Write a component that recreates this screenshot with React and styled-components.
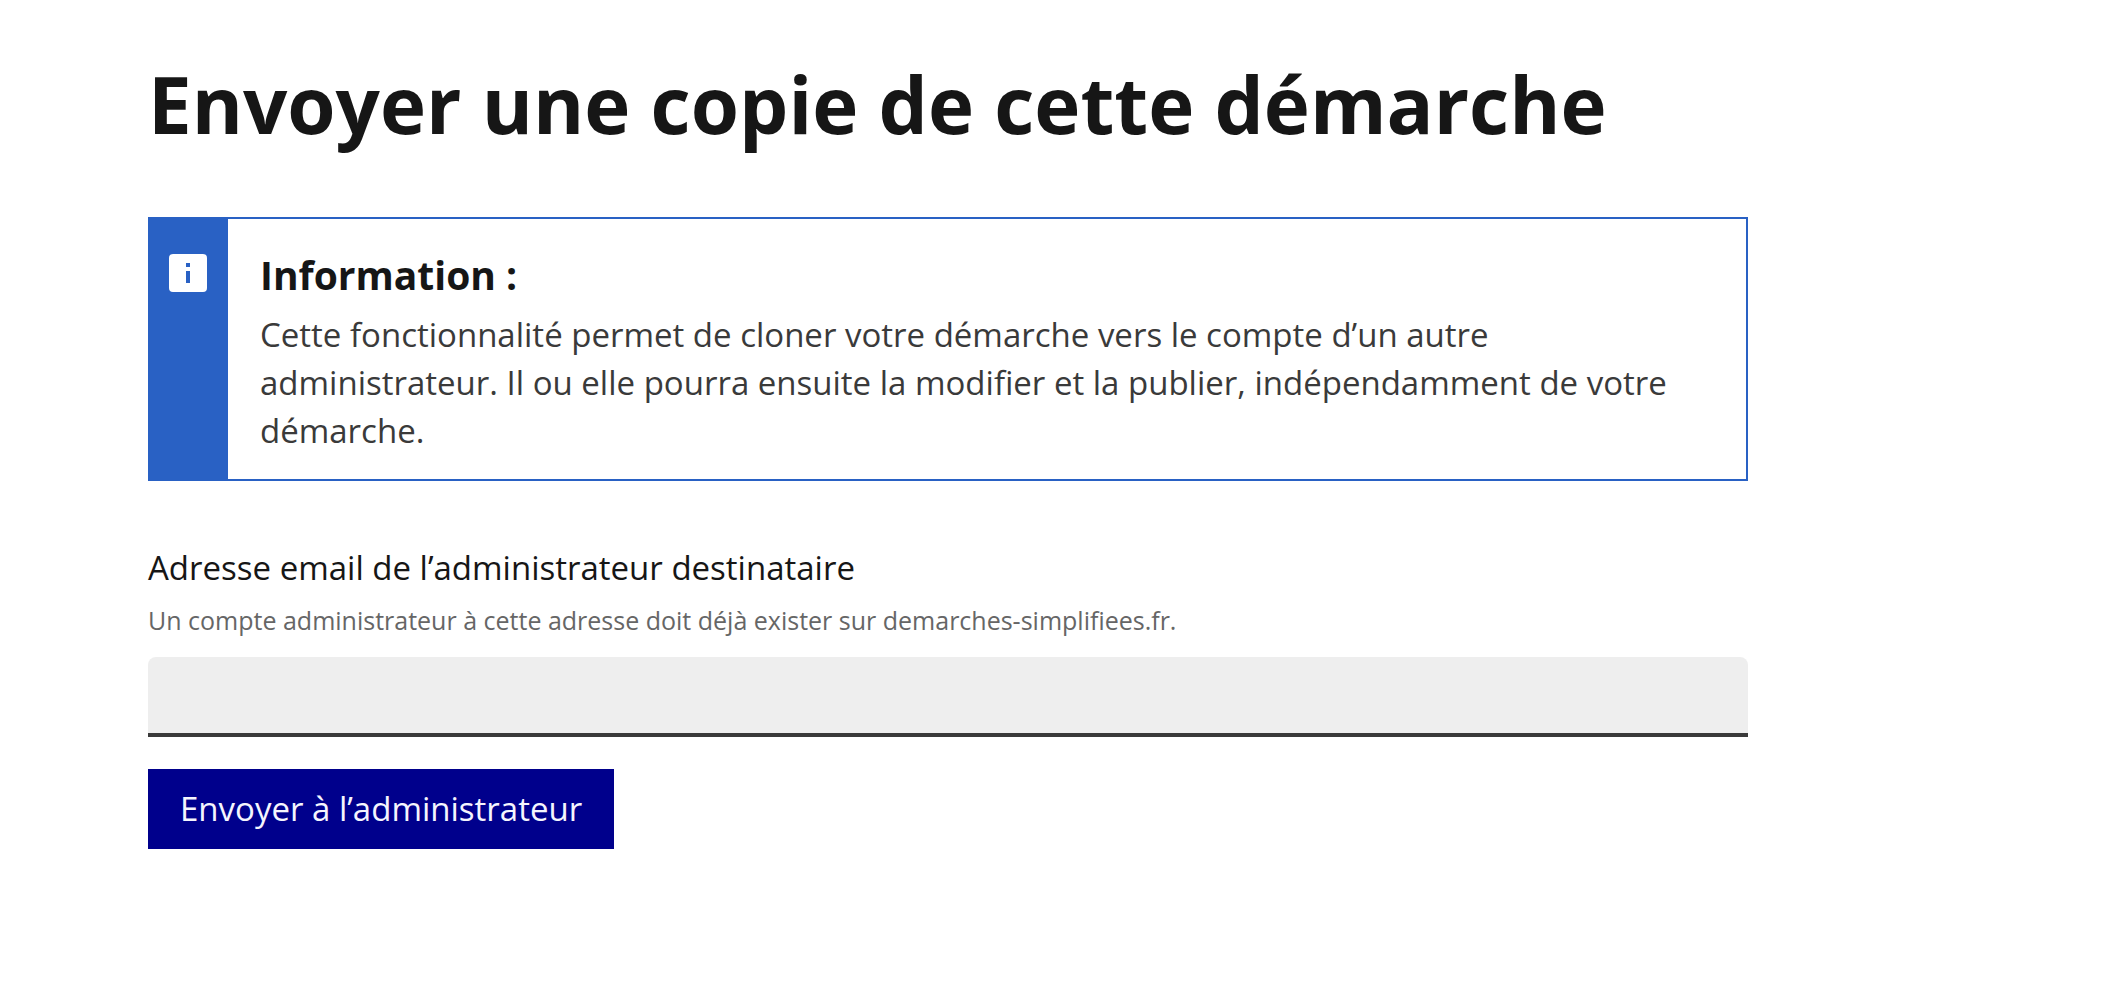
import React from "react";
import styled, { createGlobalStyle } from "styled-components";

const GlobalStyle = createGlobalStyle`
  *, *::before, *::after {
    box-sizing: border-box;
  }
  body {
    margin: 0;
    background: #ffffff;
    color: #161616;
    font-family: "Open Sans", "Noto Sans", sans-serif;
    font-size: 33px;
    line-height: 48px;
  }
`;

const Page = styled.main`
  padding: 56px 148px;
`;

const Content = styled.div`
  max-width: 1600px;
`;

const Title = styled.h1`
  margin: 0 0 65px;
  font-size: 78px;
  font-weight: 700;
  line-height: 96px;
`;

const Alert = styled.section`
  display: flex;
  margin-bottom: 63px;
  border: 2px solid #2961c4;
`;

const AlertStripe = styled.div`
  display: flex;
  flex: none;
  justify-content: center;
  align-items: flex-start;
  width: 78px;
  padding: 35px 2px 0 0;
  background: #2961c4;
`;

const AlertBody = styled.div`
  flex: 1;
  padding: 30px 64px 24px 32px;
`;

const AlertTitle = styled.h2`
  margin: 0 0 10px;
  font-size: 39px;
  font-weight: 700;
  line-height: 52px;
`;

const AlertText = styled.p`
  margin: 0;
  color: #3a3a3a;
`;

const Form = styled.form`
  display: flex;
  flex-direction: column;
  align-items: flex-start;
`;

const Label = styled.label`
  margin-bottom: 8px;
`;

const Hint = styled.p`
  margin: 0 0 17px;
  color: #666666;
  font-size: 25px;
  line-height: 40px;
`;

const Input = styled.input`
  width: 100%;
  height: 80px;
  margin-bottom: 32px;
  padding: 0 32px;
  border: 0;
  border-radius: 8px 8px 0 0;
  background: #eeeeee;
  box-shadow: inset 0 -4px 0 #3a3a3a;
  color: #3a3a3a;
  font: inherit;
`;

const Button = styled.button`
  min-height: 80px;
  padding: 16px 32px;
  border: 0;
  background: #00008c;
  color: #f5f5fe;
  font: inherit;
  font-weight: 500;
  cursor: pointer;
`;

function InfoIcon() {
  return (
    <svg width="38" height="38" viewBox="0 0 38 38" aria-hidden="true">
      <path
        fill="#ffffff"
        fillRule="evenodd"
        d="M4 0H34A4 4 0 0 1 38 4V34A4 4 0 0 1 34 38H4A4 4 0 0 1 0 34V4A4 4 0 0 1 4 0ZM17 9V13H21V9ZM17 17V29H21V17Z"
      />
    </svg>
  );
}

export default function App() {
  return (
    <>
      <GlobalStyle />
      <Page lang="fr">
        <Content>
          <Title>Envoyer une copie de cette démarche</Title>
          <Alert>
            <AlertStripe>
              <InfoIcon />
            </AlertStripe>
            <AlertBody>
              <AlertTitle>Information :</AlertTitle>
              <AlertText>
                Cette fonctionnalité permet de cloner votre démarche vers le
                compte d’un autre administrateur. Il ou elle pourra ensuite la
                modifier et la publier, indépendamment de votre démarche.
              </AlertText>
            </AlertBody>
          </Alert>
          <Form onSubmit={(event) => event.preventDefault()}>
            <Label htmlFor="email">
              Adresse email de l’administrateur destinataire
            </Label>
            <Hint id="email-hint">
              Un compte administrateur à cette adresse doit déjà exister sur
              demarches-simplifiees.fr.
            </Hint>
            <Input
              id="email"
              type="email"
              name="email"
              aria-describedby="email-hint"
            />
            <Button type="submit">Envoyer à l’administrateur</Button>
          </Form>
        </Content>
      </Page>
    </>
  );
}
